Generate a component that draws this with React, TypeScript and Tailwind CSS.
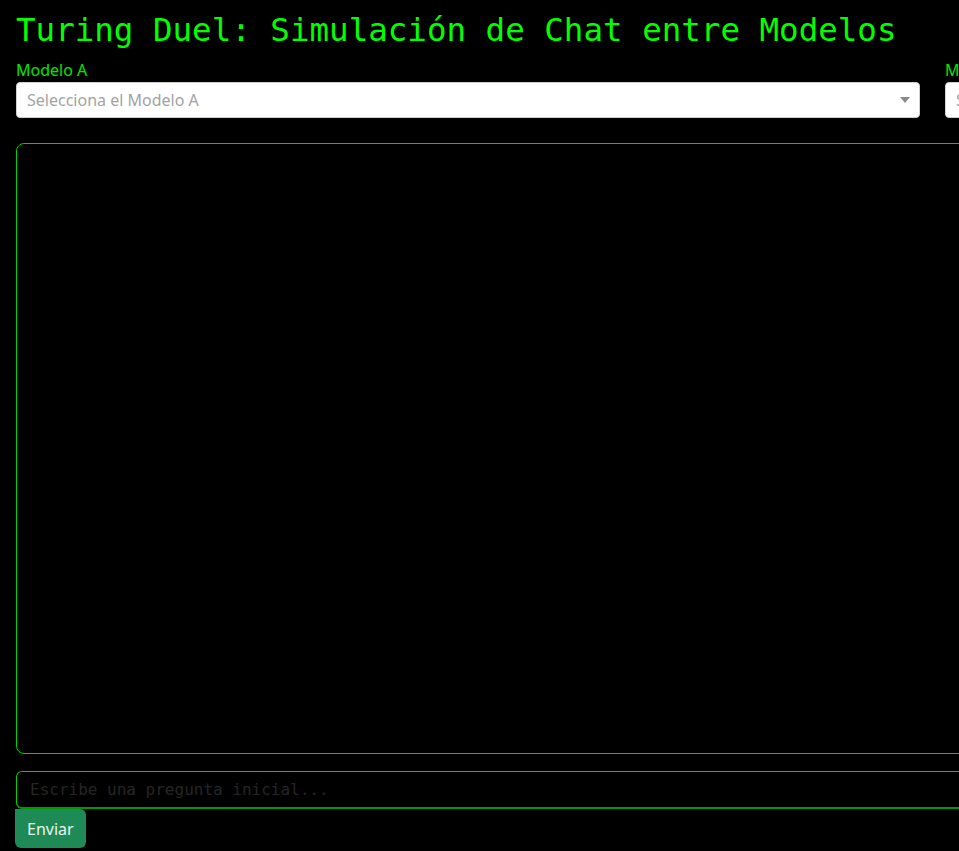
import React, { useState } from 'react';

const MODELS = ['GPT-4o', 'Claude 3.5 Sonnet', 'Llama 3 70B', 'Mistral Large'];

const ModelSelect: React.FC<{ label: string; placeholder: string; value: string; onChange: (v: string) => void }> = ({ label, placeholder, value, onChange }) => (
  <div className="flex flex-col">
    <label className="text-[16px] leading-[24px] text-[#00e600]">{label}</label>
    <div className="relative">
      <select
        value={value}
        onChange={e => onChange(e.target.value)}
        className={`w-full h-[36px] appearance-none bg-white rounded-[4px] border border-[#d0d0d0] pl-[10px] pr-8 text-[16px] outline-none ${value ? 'text-[#333]' : 'text-[#a3a3a3]'}`}
      >
        <option value="" disabled>{placeholder}</option>
        {MODELS.map(m => (
          <option key={m} value={m}>{m}</option>
        ))}
      </select>
      <svg className="absolute right-[10px] top-1/2 -translate-y-1/2 pointer-events-none" width="10" height="6" viewBox="0 0 10 6">
        <path d="M0 0 L10 0 L5 6 Z" fill="#8a8a8a" />
      </svg>
    </div>
  </div>
);

export default function App() {
  const [modelA, setModelA] = useState('');
  const [modelB, setModelB] = useState('');
  const [question, setQuestion] = useState('');

  return (
    <div className="min-h-screen h-[851px] bg-black overflow-hidden font-['Noto_Sans',sans-serif]">
      <div className="w-[1865px] px-4 pt-[11px]">
        {/* Title */}
        <h1 className="font-['DejaVu_Sans_Mono',monospace] text-[32.5px] leading-[38px] text-[#00ff00]">
          Turing Duel: Simulación de Chat entre Modelos
        </h1>

        {/* Model pickers */}
        <div className="grid grid-cols-[904px_904px] gap-[25px] mt-[9px]">
          <ModelSelect label="Modelo A" placeholder="Selecciona el Modelo A" value={modelA} onChange={setModelA} />
          <ModelSelect label="Modelo B" placeholder="Selecciona el Modelo B" value={modelB} onChange={setModelB} />
        </div>

        {/* Chat window */}
        <div className="mt-[25px] h-[611px] bg-black border border-[#00d000] rounded-[8px]" />

        {/* Input */}
        <input
          type="text"
          value={question}
          onChange={e => setQuestion(e.target.value)}
          placeholder="Escribe una pregunta inicial..."
          className="mt-[17px] w-full h-[38px] bg-black border border-[#00d000] border-b-2 border-b-[#009a00] rounded-[6px] px-[13px] font-['DejaVu_Sans_Mono',monospace] text-[16px] text-[#00ff00] placeholder:text-[#262626] outline-none"
        />
        <button className="-ml-px h-[39px] px-[12px] bg-[#1e8a56] text-[#e8f5ec] text-[16px] rounded-[6px] rounded-tl-none">
          Enviar
        </button>
      </div>
    </div>
  );
}
